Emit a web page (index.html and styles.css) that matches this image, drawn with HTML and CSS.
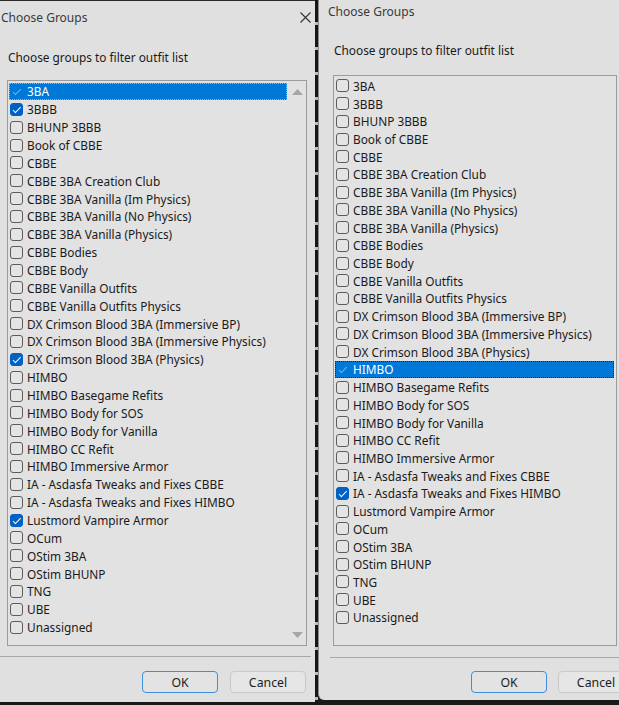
FILE: index.html
```html
<!DOCTYPE html>
<html>
<head>
<meta charset="utf-8">
<link rel="stylesheet" href="styles.css">
</head>
<body>
<div class="screen">
  <section class="dlg dlg-left">
    <header class="titlebar">
      <span class="title">Choose Groups</span>
      <svg class="close" width="11" height="11" viewBox="0 0 11 11"><path d="M0.5 0.5L10.5 10.5M10.5 0.5L0.5 10.5" stroke="#333" stroke-width="1.1" fill="none"/></svg>
    </header>
    <p class="prompt">Choose groups to filter outfit list</p>
    <div class="listbox">
      <ul class="items">
        <li class="row sel focus-warm"><span class="cb ghost"></span>3BA</li>
        <li class="row"><span class="cb on"></span>3BBB</li>
        <li class="row"><span class="cb"></span>BHUNP 3BBB</li>
        <li class="row"><span class="cb"></span>Book of CBBE</li>
        <li class="row"><span class="cb"></span>CBBE</li>
        <li class="row"><span class="cb"></span>CBBE 3BA Creation Club</li>
        <li class="row"><span class="cb"></span>CBBE 3BA Vanilla (Im Physics)</li>
        <li class="row"><span class="cb"></span>CBBE 3BA Vanilla (No Physics)</li>
        <li class="row"><span class="cb"></span>CBBE 3BA Vanilla (Physics)</li>
        <li class="row"><span class="cb"></span>CBBE Bodies</li>
        <li class="row"><span class="cb"></span>CBBE Body</li>
        <li class="row"><span class="cb"></span>CBBE Vanilla Outfits</li>
        <li class="row"><span class="cb"></span>CBBE Vanilla Outfits Physics</li>
        <li class="row"><span class="cb"></span>DX Crimson Blood 3BA (Immersive BP)</li>
        <li class="row"><span class="cb"></span>DX Crimson Blood 3BA (Immersive Physics)</li>
        <li class="row"><span class="cb on"></span>DX Crimson Blood 3BA (Physics)</li>
        <li class="row"><span class="cb"></span>HIMBO</li>
        <li class="row"><span class="cb"></span>HIMBO Basegame Refits</li>
        <li class="row"><span class="cb"></span>HIMBO Body for SOS</li>
        <li class="row"><span class="cb"></span>HIMBO Body for Vanilla</li>
        <li class="row"><span class="cb"></span>HIMBO CC Refit</li>
        <li class="row"><span class="cb"></span>HIMBO Immersive Armor</li>
        <li class="row"><span class="cb"></span>IA - Asdasfa Tweaks and Fixes CBBE</li>
        <li class="row"><span class="cb"></span>IA - Asdasfa Tweaks and Fixes HIMBO</li>
        <li class="row"><span class="cb on"></span>Lustmord Vampire Armor</li>
        <li class="row"><span class="cb"></span>OCum</li>
        <li class="row"><span class="cb"></span>OStim 3BA</li>
        <li class="row"><span class="cb"></span>OStim BHUNP</li>
        <li class="row"><span class="cb"></span>TNG</li>
        <li class="row"><span class="cb"></span>UBE</li>
        <li class="row"><span class="cb"></span>Unassigned</li>
      </ul>
      <div class="scrollbar">
        <svg width="11" height="6" viewBox="0 0 11 6"><path d="M5.5 0L11 6H0Z" fill="#a6a6a6"/></svg>
        <svg width="11" height="6" viewBox="0 0 11 6"><path d="M0 0H11L5.5 6Z" fill="#a6a6a6"/></svg>
      </div>
    </div>
    <div class="sep"></div>
    <div class="buttons">
      <button class="btn default">OK</button>
      <button class="btn">Cancel</button>
    </div>
  </section>
  <div class="divider"></div>
  <section class="dlg dlg-right">
    <header class="titlebar">
      <span class="title">Choose Groups</span>
    </header>
    <p class="prompt">Choose groups to filter outfit list</p>
    <div class="listbox">
      <ul class="items">
        <li class="row"><span class="cb"></span>3BA</li>
        <li class="row"><span class="cb"></span>3BBB</li>
        <li class="row"><span class="cb"></span>BHUNP 3BBB</li>
        <li class="row"><span class="cb"></span>Book of CBBE</li>
        <li class="row"><span class="cb"></span>CBBE</li>
        <li class="row"><span class="cb"></span>CBBE 3BA Creation Club</li>
        <li class="row"><span class="cb"></span>CBBE 3BA Vanilla (Im Physics)</li>
        <li class="row"><span class="cb"></span>CBBE 3BA Vanilla (No Physics)</li>
        <li class="row"><span class="cb"></span>CBBE 3BA Vanilla (Physics)</li>
        <li class="row"><span class="cb"></span>CBBE Bodies</li>
        <li class="row"><span class="cb"></span>CBBE Body</li>
        <li class="row"><span class="cb"></span>CBBE Vanilla Outfits</li>
        <li class="row"><span class="cb"></span>CBBE Vanilla Outfits Physics</li>
        <li class="row"><span class="cb"></span>DX Crimson Blood 3BA (Immersive BP)</li>
        <li class="row"><span class="cb"></span>DX Crimson Blood 3BA (Immersive Physics)</li>
        <li class="row"><span class="cb"></span>DX Crimson Blood 3BA (Physics)</li>
        <li class="row sel focus-dark"><span class="cb ghost"></span>HIMBO</li>
        <li class="row"><span class="cb"></span>HIMBO Basegame Refits</li>
        <li class="row"><span class="cb"></span>HIMBO Body for SOS</li>
        <li class="row"><span class="cb"></span>HIMBO Body for Vanilla</li>
        <li class="row"><span class="cb"></span>HIMBO CC Refit</li>
        <li class="row"><span class="cb"></span>HIMBO Immersive Armor</li>
        <li class="row"><span class="cb"></span>IA - Asdasfa Tweaks and Fixes CBBE</li>
        <li class="row"><span class="cb on"></span>IA - Asdasfa Tweaks and Fixes HIMBO</li>
        <li class="row"><span class="cb"></span>Lustmord Vampire Armor</li>
        <li class="row"><span class="cb"></span>OCum</li>
        <li class="row"><span class="cb"></span>OStim 3BA</li>
        <li class="row"><span class="cb"></span>OStim BHUNP</li>
        <li class="row"><span class="cb"></span>TNG</li>
        <li class="row"><span class="cb"></span>UBE</li>
        <li class="row"><span class="cb"></span>Unassigned</li>
      </ul>
    </div>
    <div class="sep"></div>
    <div class="buttons">
      <button class="btn default">OK</button>
      <button class="btn">Cancel</button>
    </div>
  </section>
</div>
</body>
</html>
```
FILE: styles.css
```css
* { box-sizing: border-box; }
html, body { margin: 0; padding: 0; }
body {
  width: 619px;
  height: 705px;
  overflow: hidden;
  background: #1a1a1a;
  font-family: "Noto Sans", "DejaVu Sans", sans-serif;
  font-size: 11.85px;
  color: #1a1a1a;
}
.screen {
  display: flex;
  align-items: flex-start;
  width: 619px;
  height: 705px;
  overflow: hidden;
}
.dlg {
  background: #e0e0e0;
  display: flex;
  flex-direction: column;
  flex: none;
}
.dlg-left {
  width: 315px;
  height: 702px;
  border-top: 1px solid #2a2a2a;
}
.divider {
  flex: none;
  width: 3px;
  height: 705px;
  background: repeating-linear-gradient(to bottom, #161616 0 22px, #bdbdbd 22px 25px);
}
.dlg-right {
  width: 320px;
  height: 700px;
  border-left: 1px solid #8a8a8a;
  border-bottom-left-radius: 6px;
}

.titlebar {
  display: flex;
  align-items: center;
  justify-content: space-between;
  flex: none;
}
.dlg-left .titlebar { height: 33px; padding: 0 4px 0 1px; }
.dlg-right .titlebar { height: 22px; padding: 0 0 0 9px; }
.title { color: #3a3a3a; font-size: 12px; }
.close { display: block; }

.prompt {
  margin: 0;
  height: 18px;
  line-height: 18px;
  white-space: nowrap;
}
.dlg-left .prompt { margin: 14px 0 0 8px; }
.dlg-right .prompt { margin: 19px 0 0 15px; }

.listbox {
  display: flex;
  border: 1px solid #9c9c9c;
  background: #e2e2e2;
  flex: none;
}
.dlg-left .listbox { margin: 14px 0 0 7px; width: 300px; height: 566px; }
.dlg-right .listbox { margin: 16px 0 0 14px; width: 284px; height: 571px; }

.items {
  list-style: none;
  margin: 0;
  padding: 1.5px 1px 0 1px;
  flex: 1;
  min-width: 0;
}
.dlg-left .items { --rh: 17.87px; }
.dlg-right .items { --rh: 17.73px; padding-top: 1px; padding-right: 2px; }
.row {
  height: var(--rh);
  display: flex;
  align-items: center;
  gap: 4px;
  padding-left: 1px;
  white-space: nowrap;
}
.row.sel { background: #0078d7; color: #fff; }
.row.focus-warm { outline: 1px dotted #e8a070; outline-offset: -1px; }
.row.focus-dark { outline: 1px dotted #2a2a2a; outline-offset: -1px; }

.cb {
  position: relative;
  flex: none;
  width: 13px;
  height: 13px;
  border: 1px solid #5c5c5c;
  border-radius: 3px;
  background: #e4e4e4;
}
.cb.on { background: #0061c2; border-color: #0061c2; }
.cb.on::after, .cb.ghost::after {
  content: "";
  position: absolute;
  left: 3.5px;
  top: 1px;
  width: 3px;
  height: 6.5px;
  border: solid #fff;
  border-width: 0 1.4px 1.4px 0;
  transform: rotate(45deg);
}
.cb.ghost { background: transparent; border-color: transparent; }
.cb.ghost::after { border-color: rgba(255,255,255,0.45); }

.scrollbar {
  flex: none;
  width: 18px;
  display: flex;
  flex-direction: column;
  justify-content: space-between;
  align-items: center;
  padding: 8px 0 7px;
}
.scrollbar svg { display: block; }

.sep {
  height: 1px;
  background: #a9a9a9;
  flex: none;
}
.dlg-left .sep { margin: 10px 4px 0 0; }
.dlg-right .sep { margin: 11px 0 0 11px; }

.buttons {
  display: flex;
  flex: none;
}
.dlg-left .buttons { margin-top: 14px; justify-content: flex-end; gap: 12px; padding-right: 9px; }
.dlg-right .buttons { margin-top: 13px; gap: 11px; padding-left: 152px; }
.btn {
  flex: none;
  width: 76px;
  height: 22px;
  font: inherit;
  font-size: 12.3px;
  color: #1c1c1c;
  background: #e6e6e6;
  border: 1px solid #c9c9c9;
  border-radius: 4px;
  padding: 0;
}
.btn.default { border: 1px solid #3d8fdc; background: #e3e3e3; }
```
